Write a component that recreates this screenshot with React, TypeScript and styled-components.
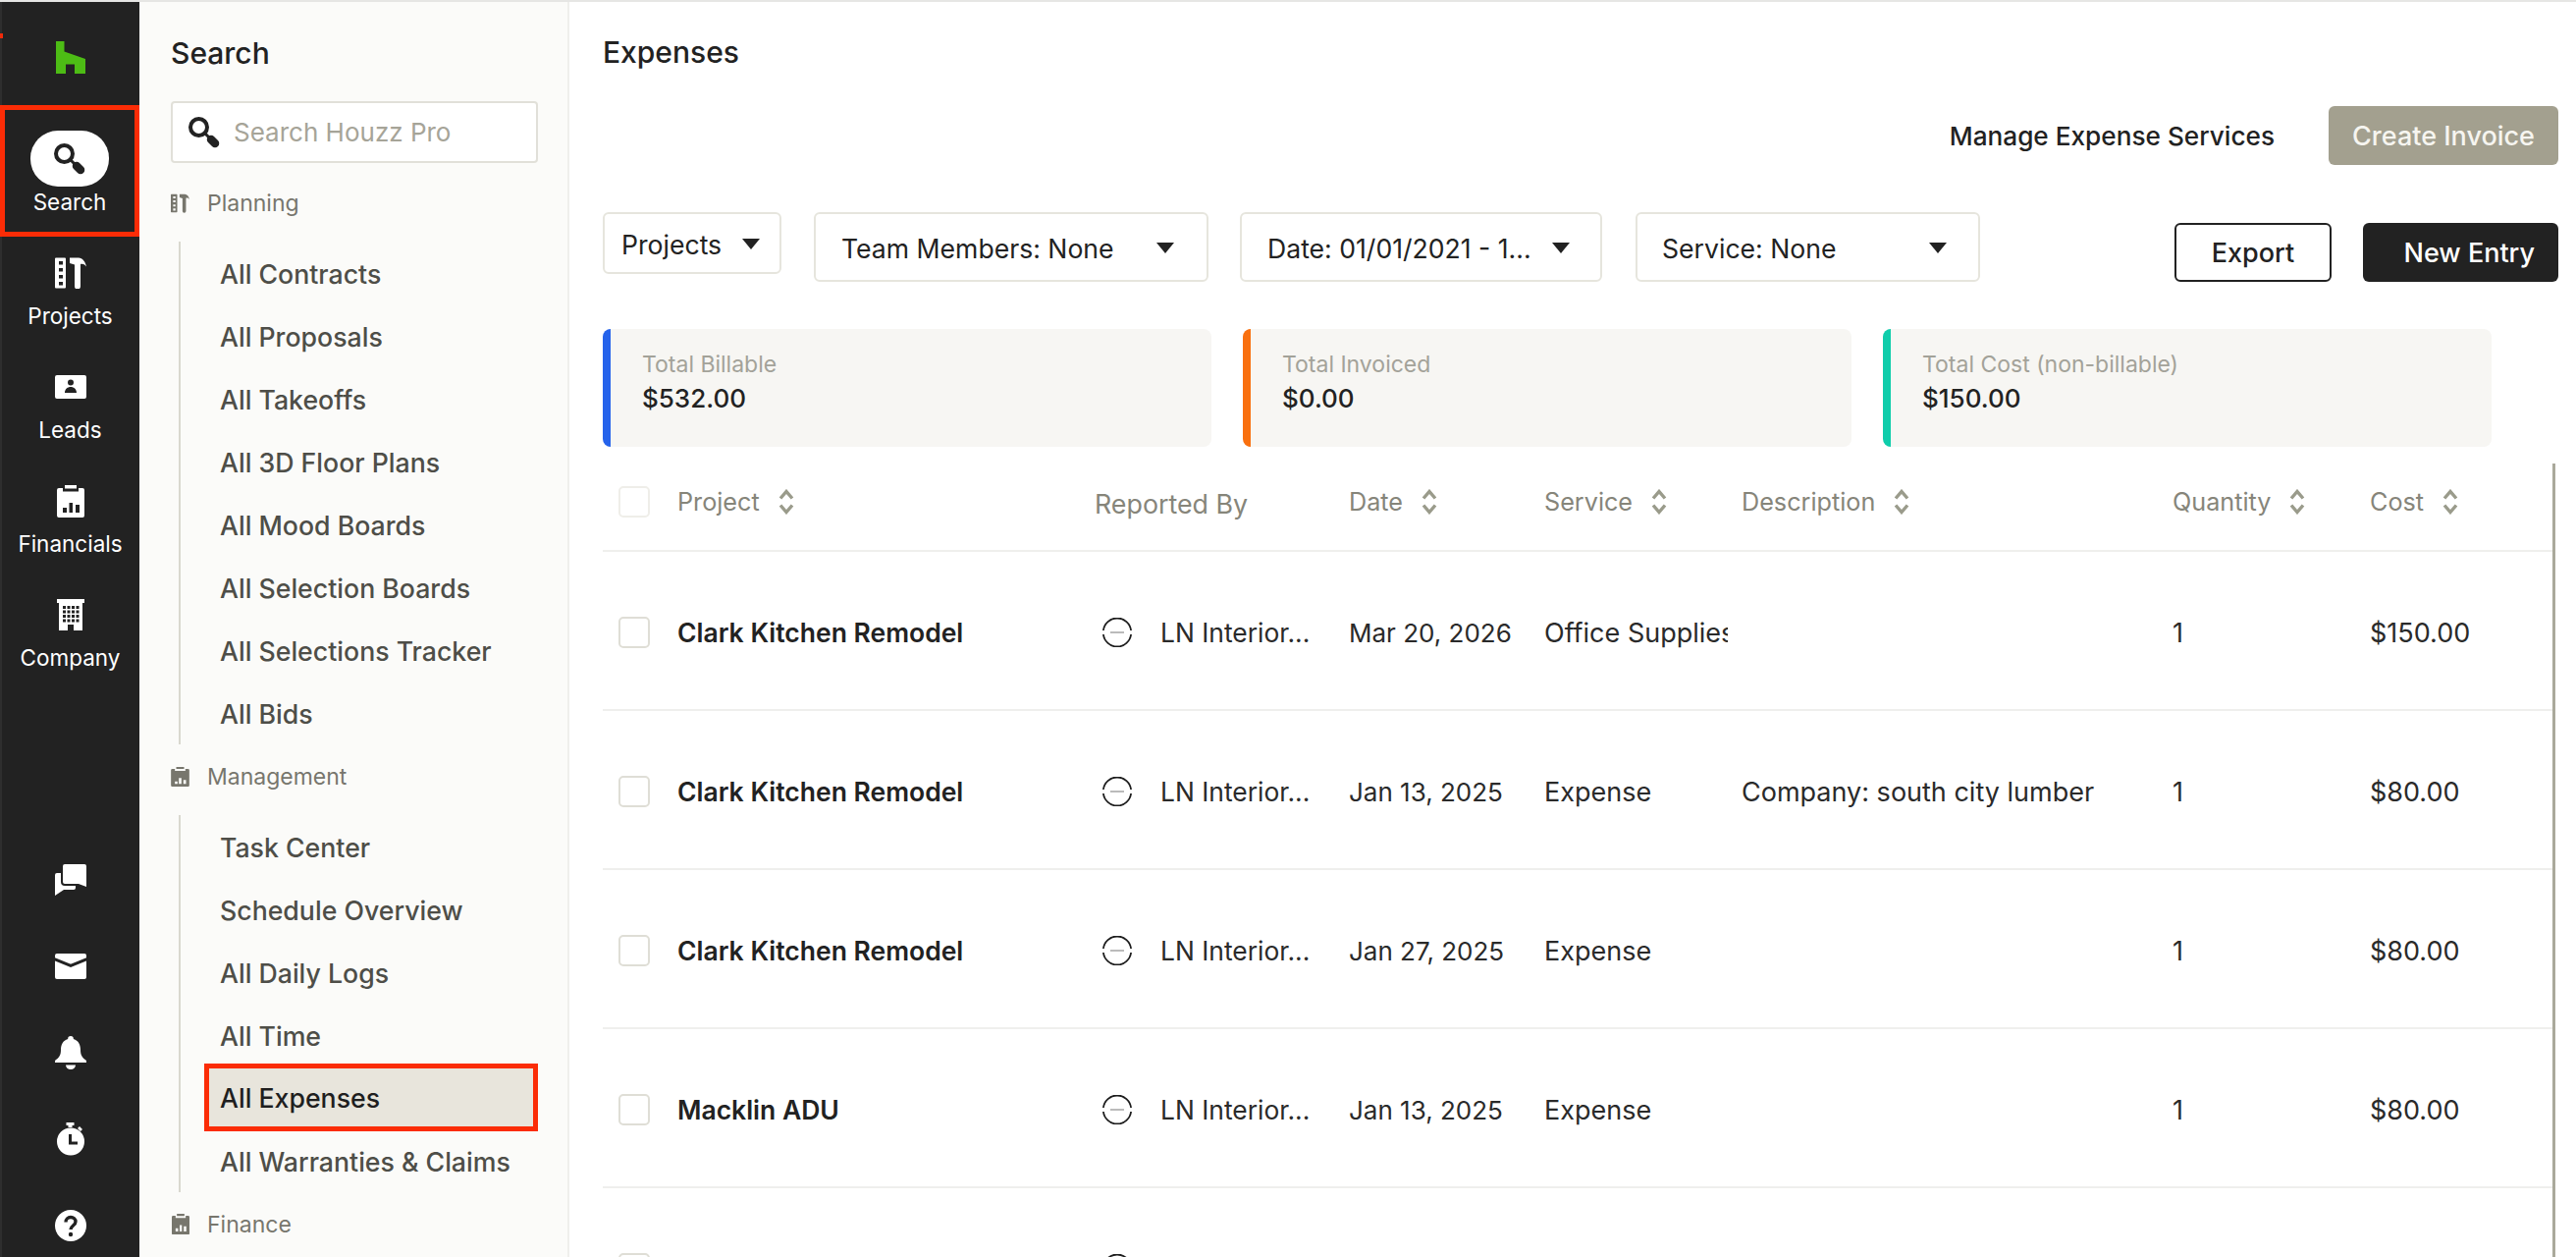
import React from "react";
import styled, { createGlobalStyle } from "styled-components";

const Global = createGlobalStyle`
  html, body { margin: 0; padding: 0; background: #fff; }
  body { font-family: Inter, "Liberation Sans", sans-serif; color: #222; -webkit-font-smoothing: antialiased; }
  * { box-sizing: border-box; }
`;

const Page = styled.div`
  display: flex;
  width: 2624px;
  height: 1280px;
  overflow: hidden;
  border-top: 2px solid #e6e6e4;
  background: #fff;
`;

const Rail = styled.nav`
  position: relative;
  flex: 0 0 142px;
  display: flex;
  flex-direction: column;
  background: #222222;
  border-left: 2px solid #2e2e2e;
  color: #fff;
`;

const RedTick = styled.span`
  position: absolute;
  left: -2px;
  top: 32px;
  width: 3px;
  height: 5px;
  background: #f02a0a;
`;

const LogoBox = styled.div`
  height: 105px;
  padding-top: 7px;
  display: flex;
  align-items: center;
  justify-content: center;
  margin-left: -1px;
`;

const RailActive = styled.a`
  height: 134px;
  margin-left: -2px;
  border: 5px solid #fb2c06;
  display: flex;
  flex-direction: column;
  align-items: center;
  padding-top: 21px;
  margin-bottom: 9px;
`;

const Pill = styled.span`
  width: 80px;
  height: 57px;
  border-radius: 28px;
  background: #fff;
  color: #222;
  display: flex;
  align-items: center;
  justify-content: center;
`;

const RailLabel = styled.span`
  font-size: 22.5px;
  line-height: 28px;
  color: #fff;
`;

const ActiveLabel = styled(RailLabel)`
  margin-top: 2px;
`;

const RailItem = styled.a`
  height: 116px;
  padding-top: 11px;
  margin-left: -1px;
  display: flex;
  flex-direction: column;
  align-items: center;
`;

const RailIcon = styled.span`
  height: 34px;
  margin-bottom: 13px;
  display: flex;
  align-items: center;
  justify-content: center;
`;

const RailBottom = styled.div`
  margin-top: auto;
  margin-left: -1px;
  padding-bottom: 16px;
  display: flex;
  flex-direction: column;
  align-items: center;
  gap: 56px;
`;

const BottomIcon = styled.span`
  height: 32px;
  display: flex;
  align-items: center;
`;

const Side = styled.aside`
  flex: 0 0 438px;
  background: #fbfbf9;
  border-right: 2px solid #efefec;
  padding-left: 32px;
  display: flex;
  flex-direction: column;
`;

const SideTitle = styled.h2`
  margin: 0;
  height: 101px;
  padding-top: 32px;
  font-size: 30px;
  line-height: 40px;
  font-weight: 500;
  color: #222;
`;

const SearchBox = styled.div`
  width: 374px;
  height: 63px;
  flex: none;
  border: 2px solid #e1e0d9;
  border-radius: 4px;
  background: #fff;
  display: flex;
  align-items: center;
  padding-left: 16px;
  gap: 14px;
  margin-bottom: 8px;
  color: #222;
`;

const Placeholder = styled.span`
  font-size: 26px;
  color: #a6a498;
`;

const GroupHead = styled.div`
  height: 64px;
  padding-top: 1px;
  display: flex;
  align-items: center;
  gap: 18px;
  font-size: 23px;
  color: #77766d;
`;

const GroupIcon = styled.span`
  width: 19px;
  display: flex;
  justify-content: center;
`;

const GroupList = styled.div`
  margin: 8px 0 0 8px;
  border-left: 2px solid #d9d8cf;
  padding-left: 24px;
  display: flex;
  flex-direction: column;
`;

const SideItem = styled.a<{ $active?: boolean }>`
  display: flex;
  align-items: center;
  width: 340px;
  font-size: 26.7px;
  font-weight: 500;
  height: ${(p) => (p.$active ? "69px" : "64px")};
  margin: ${(p) => (p.$active ? "-3px 0 -2px" : "0")};
  padding: 1px 0 0 ${(p) => (p.$active ? "11px" : "16px")};
  color: ${(p) => (p.$active ? "#1f1f1f" : "#4e4e48")};
  background: ${(p) => (p.$active ? "#e8e5dc" : "transparent")};
  border: ${(p) => (p.$active ? "5px solid #fb2c06" : "none")};
`;

const Main = styled.main`
  flex: 1;
  min-width: 0;
  display: flex;
  flex-direction: column;
  padding-left: 34px;
`;

const Title = styled.h1`
  margin: 0;
  height: 106px;
  padding-top: 31px;
  font-size: 30px;
  line-height: 40px;
  font-weight: 500;
`;

const ActionRow = styled.div`
  height: 60px;
  padding-right: 18px;
  display: flex;
  justify-content: flex-end;
  align-items: center;
  gap: 55px;
`;

const ManageLink = styled.a`
  font-size: 26.2px;
  font-weight: 500;
  color: #222;
`;

const CreateButton = styled.button`
  width: 234px;
  height: 60px;
  border: none;
  border-radius: 6px;
  background: #a3a08f;
  color: #f6f5f0;
  font: 500 27px Inter, sans-serif;
`;

const FilterRow = styled.div`
  margin-top: 48px;
  height: 71px;
  padding-right: 18px;
  display: flex;
  align-items: flex-start;
`;

const Select = styled.div<{ $w: number; $gap: number; $short?: boolean; $pad: number; $caret: number }>`
  width: ${(p) => p.$w}px;
  height: ${(p) => (p.$short ? 63 : 71)}px;
  margin-right: ${(p) => p.$gap}px;
  flex: none;
  border: 2px solid #e6e5dd;
  border-radius: 6px;
  display: flex;
  align-items: center;
  padding: 2px 0 0 ${(p) => p.$pad}px;
  font-size: 26.6px;
  color: #222;
  position: relative;
  & > i { position: absolute; left: ${(p) => p.$caret}px; top: ${(p) => (p.$short ? 25 : 29)}px; }
`;

const Caret = styled.i`
  width: 0;
  height: 0;
  border-left: 9px solid transparent;
  border-right: 9px solid transparent;
  border-top: 11px solid #222;
`;

const RightButtons = styled.div`
  margin-left: auto;
  margin-top: 11px;
  display: flex;
  gap: 32px;
`;

const ExportButton = styled.button`
  width: 160px;
  height: 60px;
  border: 2px solid #222;
  border-radius: 6px;
  background: #fff;
  color: #222;
  font: 500 27px Inter, sans-serif;
`;

const NewButton = styled.button`
  width: 199px;
  height: 60px;
  border: none;
  border-radius: 6px;
  background: #222;
  color: #fff;
  text-align: right;
  padding-right: 24px;
  font: 500 27px Inter, sans-serif;
`;

const CardRow = styled.div`
  margin-top: 48px;
  display: flex;
  gap: 32px;
`;

const Card = styled.div<{ $c: string }>`
  width: 620px;
  height: 120px;
  background: #f7f6f3;
  border-radius: 8px;
  border-left: 8px solid ${(p) => p.$c};
  padding: 21px 0 0 32px;
`;

const CardLabel = styled.div`
  font-size: 23px;
  line-height: 30px;
  color: #a3a299;
`;

const CardValue = styled.div`
  font-size: 26px;
  line-height: 36px;
  margin-top: 2px;
  font-weight: 500;
  color: #222;
`;

const Table = styled.div`
  margin-top: 17px;
  width: 1989px;
  flex: 1;
  min-height: 0;
  overflow: hidden;
  border-right: 3px solid #aaa99b;
`;

const Cols = `76px 425px 259px 199px 201px 439px 201px 185px`;

const HeadRow = styled.div`
  display: grid;
  grid-template-columns: ${Cols};
  height: 90px;
  padding-bottom: 10px;
  align-items: center;
  border-bottom: 2px solid #efefed;
  font-size: 25.2px;
  color: #86857a;
`;

const HeadCell = styled.div`
  display: flex;
  align-items: center;
  gap: 19px;
`;

const PlainHead = styled(HeadCell)`
  font-size: 26.8px;
  padding-top: 3px;
`;

const Row = styled.div`
  display: grid;
  grid-template-columns: ${Cols};
  height: 162px;
  padding-top: 4px;
  align-items: center;
  border-bottom: 2px solid #efefed;
  font-size: 27px;
  color: #2a2a2a;
`;

const CheckCell = styled.div`
  padding-left: 16px;
  display: flex;
`;

const Check = styled.span<{ $light?: boolean }>`
  width: 32px;
  height: 32px;
  border: 2px solid ${(p) => (p.$light ? "#efeee9" : "#dfded6")};
  border-radius: 5px;
  background: #fff;
`;

const ProjectCell = styled.div`
  font-size: 26.5px;
  font-weight: 600;
  color: #222;
`;

const ReportCell = styled.div`
  display: flex;
  align-items: center;
  padding-left: 8px;
  gap: 29px;
  font-size: 26.4px;
`;

const DateCell = styled.div`
  font-size: 26px;
  white-space: nowrap;
`;

const ClipCell = styled.div`
  overflow: hidden;
  white-space: nowrap;
  margin-right: 14px;
`;

const Cell = styled.div`
  white-space: nowrap;
`;

const Sort = () => (
  <svg width="16" height="26" viewBox="0 0 16 26" fill="none" stroke="#9a9b8b" strokeWidth="3.4">
    <path d="M2 9.500 8 2.500l6 7M2 16.500l6 7 6-7" />
  </svg>
);

const Avatar = () => (
  <svg width="30" height="30" viewBox="0 0 30 30" fill="none">
    <path d="M.9 13A14.200 14.200 0 0 1 29.100 13M29.100 17A14.200 14.200 0 0 1 .9 17" stroke="#1d1d1d" strokeWidth="1.800" />
    <path d="M8 15h14" stroke="#bbb" strokeWidth="2" />
  </svg>
);

const SearchIcon = () => (
  <svg width="32" height="32" viewBox="0 0 32 32" fill="none" stroke="currentColor">
    <circle cx="10.500" cy="10.500" r="8.500" strokeWidth="4" />
    <path d="M16 16l6 6" strokeWidth="3" />
    <path d="M23 23l4 4" strokeWidth="8.500" strokeLinecap="round" />
  </svg>
);

const ProjectsIcon = ({ s = 32 }: { s?: number }) => (
  <svg width={s} height={s} viewBox="0 0 32 32" fill="currentColor">
    <path
      fillRule="evenodd"
      d="M1 .5h9a1 1 0 0 1 1 1v29a1 1 0 0 1-1 1H1a1 1 0 0 1-1-1v-29a1 1 0 0 1 1-1ZM4 4v3.500h4V4H4Zm0 7v3.500h4V11H4Zm0 7v3.500h4V18H4Zm0 7v3.500h4V25H4Z"
    />
    <path d="M15 .5h9c4 0 7 4 8 9-2-2.500-4-3-6-2.500v22.500a3 3 0 0 1-6 0V7.500l-5-1.500Z" />
  </svg>
);

const LeadsIcon = () => (
  <svg width="32" height="24" viewBox="0 0 32 24" fill="currentColor">
    <path
      fillRule="evenodd"
      d="M2 0h28a2 2 0 0 1 2 2v20a2 2 0 0 1-2 2H2a2 2 0 0 1-2-2V2a2 2 0 0 1 2-2Zm14 4.500a3 3 0 1 0 0 6 3 3 0 0 0 0-6ZM10 18c0-4 3-6 6-6s6 2 6 6H10Z"
    />
  </svg>
);

const FinanceIcon = ({ s = 28 }: { s?: number }) => (
  <svg width={s} height={(s * 33) / 28} viewBox="0 0 28 33" fill="currentColor">
    <path d="M8 0h12v3.500H8z" />
    <path
      fillRule="evenodd"
      d="M2 3h4v3.500h16V3h4a2 2 0 0 1 2 2v26a2 2 0 0 1-2 2H2a2 2 0 0 1-2-2V5a2 2 0 0 1 2-2Zm4 20v5h4v-5H6Zm6.500-5v10h3.500V18h-3.500ZM19 20v8h4v-8h-4Z"
    />
  </svg>
);

const CompanyIcon = () => (
  <svg width="28" height="32" viewBox="0 0 28 32" fill="currentColor">
    <path
      fillRule="evenodd"
      d="M0 0h28v4h-2v28H17v-6h-6v6H2V4H0V0Zm6 7v3h3V7H6Zm4.500 0v3h3V7h-3ZM15 7v3h3V7h-3Zm4.500 0v3h3V7h-3ZM6 11.500v3h3v-3H6Zm4.500 0v3h3v-3h-3Zm4.500 0v3h3v-3h-3Zm4.500 0v3h3v-3h-3ZM6 16v3h3v-3H6Zm4.500 0v3h3v-3h-3Zm4.500 0v3h3v-3h-3Zm4.500 0v3h3v-3h-3ZM6 20.500v3h3v-3H6Zm4.500 0v3h3v-3h-3Zm4.500 0v3h3v-3h-3Zm4.500 0v3h3v-3h-3Z"
    />
  </svg>
);

const ChatIcon = () => (
  <svg width="32" height="32" viewBox="0 0 32 32" fill="currentColor">
    <path d="M10 0h20a2 2 0 0 1 2 2v21l-8-3H10a2 2 0 0 1-2-2V2a2 2 0 0 1 2-2Z" />
    <path d="M2 9h4v9a4 4 0 0 0 4 4h11v2a2 2 0 0 1-2 2H9L0 32V11a2 2 0 0 1 2-2Z" />
  </svg>
);

const MailIcon = () => (
  <svg width="32" height="26" viewBox="0 0 32 26" fill="none">
    <rect width="32" height="26" rx="2" fill="currentColor" />
    <path d="M-1 5.500 16 12.500 33 5.500" stroke="#222" strokeWidth="3" />
  </svg>
);

const BellIcon = () => (
  <svg width="32" height="34" viewBox="0 0 32 34" fill="currentColor">
    <path d="M16 0a2.800 2.800 0 0 1 2.800 3C24 4.500 26 9 26 14c0 5 1.500 8 6 11v2H0v-2c4.500-3 6-6 6-11 0-5 2-9.500 7.200-11A2.800 2.800 0 0 1 16 0Z" />
    <path d="M11 29.500h10a5 4.500 0 0 1-10 0Z" />
  </svg>
);

const TimerIcon = () => (
  <svg width="28" height="34" viewBox="0 0 28 34" fill="currentColor">
    <path d="M9.500 0h8v3h-2v2h-4V3h-2zM23 4l3 3-2 2-3-3z" />
    <path
      fillRule="evenodd"
      d="M14 5.500a14 14 0 1 1 0 28 14 14 0 0 1 0-28ZM12 12v10.500h9v-3h-6V12h-3Z"
    />
  </svg>
);

const HelpIcon = () => (
  <svg width="32" height="32" viewBox="0 0 32 32">
    <circle cx="16" cy="16" r="16" fill="currentColor" />
    <path d="M11 12.500c0-3 2.200-5 5-5s5 2 5 4.500c0 4-5 4-5 8" fill="none" stroke="#222" strokeWidth="3.400" />
    <circle cx="16" cy="25" r="2.200" fill="#222" />
  </svg>
);

const CalendarSmall = () => (
  <svg width="19" height="20" viewBox="0 0 28 30" fill="currentColor">
    <path d="M8 0h12v3H8z" />
    <path
      fillRule="evenodd"
      d="M2 3h4v3h16V3h4a2 2 0 0 1 2 2v23a2 2 0 0 1-2 2H2a2 2 0 0 1-2-2V5a2 2 0 0 1 2-2Zm4 19v4h4v-4H6Zm6-5v9h4v-9h-4Zm7 3v6h4v-6h-4Z"
    />
  </svg>
);

const Logo = () => (
  <svg width="30" height="33" viewBox="0 0 30 33">
    <path d="M0 0h8.500v10.500L30 18v15H19V23.500H10V33H0Z" fill="#4dbc15" />
  </svg>
);

const planning = ["All Contracts", "All Proposals", "All Takeoffs", "All 3D Floor Plans", "All Mood Boards", "All Selection Boards", "All Selections Tracker", "All Bids"];
const management = ["Task Center", "Schedule Overview", "All Daily Logs", "All Time", "All Expenses", "All Warranties & Claims"];

const railItems = [
  { label: "Projects", icon: <ProjectsIcon /> },
  { label: "Leads", icon: <LeadsIcon /> },
  { label: "Financials", icon: <FinanceIcon /> },
  { label: "Company", icon: <CompanyIcon /> },
];

const rows = [
  { project: "Clark Kitchen Remodel", date: "Mar 20, 2026", service: "Office Supplies", desc: "", cost: "$150.00" },
  { project: "Clark Kitchen Remodel", date: "Jan 13, 2025", service: "Expense", desc: "Company: south city lumber", cost: "$80.00" },
  { project: "Clark Kitchen Remodel", date: "Jan 27, 2025", service: "Expense", desc: "", cost: "$80.00" },
  { project: "Macklin ADU", date: "Jan 13, 2025", service: "Expense", desc: "", cost: "$80.00" },
];

export default function App() {
  return (
    <Page>
      <Global />
      <Rail>
        <RedTick />
        <LogoBox>
          <Logo />
        </LogoBox>
        <RailActive>
          <Pill>
            <SearchIcon />
          </Pill>
          <ActiveLabel>Search</ActiveLabel>
        </RailActive>
        {railItems.map((r) => (
          <RailItem key={r.label}>
            <RailIcon>{r.icon}</RailIcon>
            <RailLabel>{r.label}</RailLabel>
          </RailItem>
        ))}
        <RailBottom>
          <BottomIcon><ChatIcon /></BottomIcon>
          <BottomIcon><MailIcon /></BottomIcon>
          <BottomIcon><BellIcon /></BottomIcon>
          <BottomIcon><TimerIcon /></BottomIcon>
          <BottomIcon><HelpIcon /></BottomIcon>
        </RailBottom>
      </Rail>

      <Side>
        <SideTitle>Search</SideTitle>
        <SearchBox>
          <SearchIcon />
          <Placeholder>Search Houzz Pro</Placeholder>
        </SearchBox>
        <GroupHead>
          <GroupIcon><ProjectsIcon s={20} /></GroupIcon>
          Planning
        </GroupHead>
        <GroupList>
          {planning.map((t) => (
            <SideItem key={t}>{t}</SideItem>
          ))}
        </GroupList>
        <GroupHead>
          <GroupIcon><CalendarSmall /></GroupIcon>
          Management
        </GroupHead>
        <GroupList>
          {management.map((t) => (
            <SideItem key={t} $active={t === "All Expenses"}>{t}</SideItem>
          ))}
        </GroupList>
        <GroupHead>
          <GroupIcon><FinanceIcon s={18} /></GroupIcon>
          Finance
        </GroupHead>
      </Side>

      <Main>
        <Title>Expenses</Title>
        <ActionRow>
          <ManageLink>Manage Expense Services</ManageLink>
          <CreateButton>Create Invoice</CreateButton>
        </ActionRow>
        <FilterRow>
          <Select $w={182} $gap={33} $short $pad={17} $caret={140}>Projects<Caret /></Select>
          <Select $w={402} $gap={32} $pad={26} $caret={347}>Team Members: None<Caret /></Select>
          <Select $w={369} $gap={34} $pad={26} $caret={316}>Date: 01/01/2021 - 1...<Caret /></Select>
          <Select $w={351} $gap={0} $pad={25} $caret={297}>Service: None<Caret /></Select>
          <RightButtons>
            <ExportButton>Export</ExportButton>
            <NewButton>New Entry</NewButton>
          </RightButtons>
        </FilterRow>
        <CardRow>
          <Card $c="#2563eb"><CardLabel>Total Billable</CardLabel><CardValue>$532.00</CardValue></Card>
          <Card $c="#f9700f"><CardLabel>Total Invoiced</CardLabel><CardValue>$0.00</CardValue></Card>
          <Card $c="#0fcdab"><CardLabel>Total Cost (non-billable)</CardLabel><CardValue>$150.00</CardValue></Card>
        </CardRow>
        <Table>
          <HeadRow>
            <CheckCell><Check $light /></CheckCell>
            <HeadCell>Project<Sort /></HeadCell>
            <PlainHead>Reported By</PlainHead>
            <HeadCell>Date<Sort /></HeadCell>
            <HeadCell>Service<Sort /></HeadCell>
            <HeadCell>Description<Sort /></HeadCell>
            <HeadCell>Quantity<Sort /></HeadCell>
            <HeadCell>Cost<Sort /></HeadCell>
          </HeadRow>
          {rows.map((r, i) => (
            <Row key={i}>
              <CheckCell><Check /></CheckCell>
              <ProjectCell>{r.project}</ProjectCell>
              <ReportCell><Avatar />LN Interior...</ReportCell>
              <DateCell>{r.date}</DateCell>
              <ClipCell>{r.service}</ClipCell>
              <Cell>{r.desc}</Cell>
              <Cell>1</Cell>
              <Cell>{r.cost}</Cell>
            </Row>
          ))}
          <Row>
            <CheckCell><Check /></CheckCell>
            <div />
            <ReportCell><Avatar /></ReportCell>
          </Row>
        </Table>
      </Main>
    </Page>
  );
}
